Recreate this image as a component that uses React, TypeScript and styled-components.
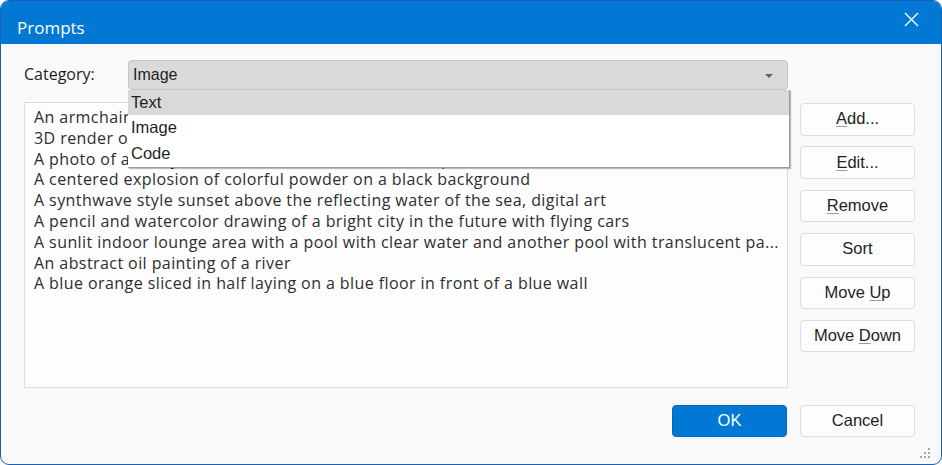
import React from "react";
import styled, { createGlobalStyle } from "styled-components";

const Global = createGlobalStyle`
  html, body { margin: 0; padding: 0; background: #ffffff; }
  * { box-sizing: border-box; }
`;

const Window = styled.div`
  width: 942px;
  height: 465px;
  border: 1px solid #1d5fb3;
  border-radius: 9px;
  overflow: hidden;
  background: #f9f9f9;
  display: flex;
  flex-direction: column;
  position: relative;
`;

const TitleBar = styled.div`
  height: 43px;
  background: #0078d4;
  display: flex;
  align-items: flex-start;
  justify-content: space-between;
  padding: 0 22px 0 16px;
  flex-shrink: 0;
`;

const Title = styled.div`
  color: #ffffff;
  font-family: "Open Sans", "Noto Sans", sans-serif;
  font-size: 17px;
  line-height: 20px;
  padding-top: 17px;
`;

const CloseButton = styled.div`
  width: 16px;
  height: 16px;
  display: flex;
  align-items: center;
  justify-content: center;
  margin-top: 10px;
`;

const Body = styled.div`
  flex: 1;
  display: flex;
  flex-direction: column;
  padding: 16px 26px 0 23px;
`;

const CategoryRow = styled.div`
  display: flex;
  align-items: center;
  height: 30px;
`;

const Label = styled.div`
  width: 104px;
  font-family: "Open Sans", "Noto Sans", sans-serif;
  font-size: 16px;
  color: #1f1f1f;
  padding-bottom: 2px;
`;

const ComboWrap = styled.div`
  position: relative;
  width: 660px;
  height: 30px;
`;

const Combo = styled.div`
  height: 30px;
  border: 1px solid #c4c4c4;
  border-radius: 4px;
  background: #dadada;
  display: flex;
  align-items: center;
  justify-content: space-between;
  padding: 0 14px 0 4px;
  font-family: "Liberation Sans", Arial, sans-serif;
  font-size: 16px;
  color: #1f1f1f;
`;

const Arrow = styled.div`
  width: 0;
  height: 0;
  border-left: 4px solid transparent;
  border-right: 4px solid transparent;
  border-top: 4px solid #606060;
  margin-top: 1px;
`;

const Dropdown = styled.div`
  position: absolute;
  top: 30px;
  left: 0;
  width: 662px;
  background: #ffffff;
  border-right: 1px solid #9a9a9a;
  border-bottom: 1px solid #9a9a9a;
  box-shadow: 1px 1px 1px rgba(0, 0, 0, 0.25);
  z-index: 5;
  padding-bottom: 1px;
`;

const DropItem = styled.div<{ $active?: boolean }>`
  height: 25.3px;
  display: flex;
  align-items: center;
  padding-left: 3px;
  font-family: "Liberation Sans", Arial, sans-serif;
  font-size: 16.5px;
  color: #1f1f1f;
  background: ${(p) => (p.$active ? "#d9d9d9" : "#ffffff")};
`;

const MainRow = styled.div`
  display: flex;
  gap: 12px;
  margin-top: 12px;
`;

const ListBox = styled.div`
  width: 764px;
  height: 286px;
  background: #fdfdfd;
  border: 1px solid #dcdcdc;
  padding: 4px 2px 0 9px;
`;

const ListItem = styled.div`
  height: 20.8px;
  line-height: 20.8px;
  font-family: "Open Sans", "Noto Sans", sans-serif;
  font-size: 16px;
  letter-spacing: 0.42px;
  color: #2e2e2e;
  white-space: nowrap;
  overflow: hidden;
`;

const ButtonColumn = styled.div`
  display: flex;
  flex-direction: column;
  gap: 10.9px;
  padding-top: 1px;
`;

const Button = styled.div<{ $primary?: boolean }>`
  width: 115px;
  height: 32.5px;
  border-radius: 4px;
  border: 1px solid ${(p) => (p.$primary ? "#0067c0" : "#dedede")};
  background: ${(p) => (p.$primary ? "#0078d4" : "#fdfdfd")};
  color: ${(p) => (p.$primary ? "#ffffff" : "#1f1f1f")};
  display: flex;
  align-items: center;
  justify-content: center;
  font-family: "Liberation Sans", Arial, sans-serif;
  font-size: 16.5px;
  padding-bottom: 1px;
`;

const Key = styled.span`
  text-decoration: underline;
  text-decoration-color: #9a9a9a;
  text-underline-offset: 2px;
`;

const Footer = styled.div`
  display: flex;
  justify-content: flex-end;
  gap: 13px;
  margin-top: 16.5px;
`;

const Grip = styled.div`
  position: absolute;
  right: 11px;
  bottom: 10px;
  width: 10px;
  height: 10px;
`;

const items = [
  "An armchair in the shape of an avocado",
  "3D render of a cute tropical fish in an aquarium on a dark blue background, digital art",
  "A photo of a teddy bear on a skateboard in Times Square",
  "A centered explosion of colorful powder on a black background",
  "A synthwave style sunset above the reflecting water of the sea, digital art",
  "A pencil and watercolor drawing of a bright city in the future with flying cars",
  "A sunlit indoor lounge area with a pool with clear water and another pool with translucent pa...",
  "An abstract oil painting of a river",
  "A blue orange sliced in half laying on a blue floor in front of a blue wall",
];

export default function App() {
  return (
    <>
      <Global />
      <Window>
        <TitleBar>
          <Title>Prompts</Title>
          <CloseButton>
            <svg width="15" height="15" viewBox="0 0 15 15">
              <path d="M1 1 L14 14 M14 1 L1 14" stroke="#ffffff" strokeWidth="1.4" fill="none" />
            </svg>
          </CloseButton>
        </TitleBar>
        <Body>
          <CategoryRow>
            <Label>Category:</Label>
            <ComboWrap>
              <Combo>
                <span>Image</span>
                <Arrow />
              </Combo>
              <Dropdown>
                <DropItem $active>Text</DropItem>
                <DropItem>Image</DropItem>
                <DropItem>Code</DropItem>
              </Dropdown>
            </ComboWrap>
          </CategoryRow>
          <MainRow>
            <ListBox>
              {items.map((t) => (
                <ListItem key={t}>{t}</ListItem>
              ))}
            </ListBox>
            <ButtonColumn>
              <Button><span><Key>A</Key>dd...</span></Button>
              <Button><span><Key>E</Key>dit...</span></Button>
              <Button><span><Key>R</Key>emove</span></Button>
              <Button>Sort</Button>
              <Button><span>Move <Key>U</Key>p</span></Button>
              <Button><span>Move <Key>D</Key>own</span></Button>
            </ButtonColumn>
          </MainRow>
          <Footer>
            <Button $primary>OK</Button>
            <Button>Cancel</Button>
          </Footer>
        </Body>
        <Grip>
          <svg width="10" height="10" viewBox="0 0 10 10">
            {[
              [8, 0], [8, 4], [4, 4], [8, 8], [4, 8], [0, 8],
            ].map(([x, y]) => (
              <rect key={`${x}-${y}`} x={x} y={y} width="2" height="2" fill="#a8a8a8" />
            ))}
          </svg>
        </Grip>
      </Window>
    </>
  );
}
